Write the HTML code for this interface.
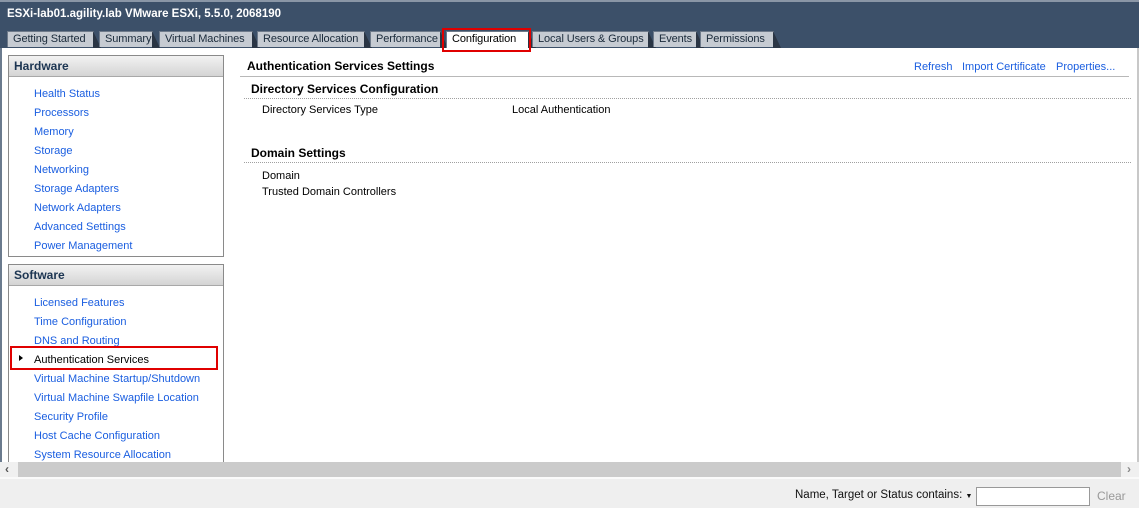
<!DOCTYPE html>
<html><head><style>
*{margin:0;padding:0;box-sizing:border-box}
body{width:1139px;height:508px;overflow:hidden;background:#fff;font-family:"Liberation Sans",sans-serif;font-size:11px;position:relative;color:#000}
.a{position:absolute;white-space:nowrap}
#title{left:0;top:0;width:1139px;height:48px;background:#3c5069;border-top:2px solid #8a96a6}
.tab{position:absolute;top:31px;height:16px;background:#c6cbd2;border:1px solid #6e7a8a;border-bottom:none;color:#1a2a3a;font-size:11px;padding:1px 0 0 5px;white-space:nowrap;letter-spacing:-0.1px}
.tab:after{content:"";position:absolute;right:-8px;top:-1px;border-left:8px solid #2a3544;border-top:17px solid transparent}
.lnk{color:#1a5ee0}
.box{position:absolute;left:8px;width:216px;border:1px solid #8a8a8a;background:#fff}
.hd{height:21px;background:linear-gradient(#f2f2f2,#d4d4d4);border-bottom:1px solid #a8a8a8;font-weight:bold;color:#1c3552;padding:3px 0 0 5px;font-size:12px}
.dot{position:absolute;height:0;border-top:1px dotted #a0a0a0}
</style></head><body>
<div id="title" class="a"></div>
<div class="a" style="left:7px;top:8px;color:#fff;font-weight:bold;font-size:11.5px">ESXi-lab01.agility.lab VMware ESXi, 5.5.0, 2068190</div>
<div class="tab" style="left:7px;width:87px">Getting Started</div>
<div class="tab" style="left:99px;width:54px">Summary</div>
<div class="tab" style="left:159px;width:94px">Virtual Machines</div>
<div class="tab" style="left:257px;width:108px">Resource Allocation</div>
<div class="tab" style="left:370px;width:71px">Performance</div>
<div class="tab" style="left:446px;width:83px;background:#fff;color:#000;height:17px">Configuration</div>
<div class="a" style="left:442px;top:28px;width:89px;height:24px;border:2px solid #e00000"></div>
<div class="tab" style="left:532px;width:117px">Local Users &amp; Groups</div>
<div class="tab" style="left:653px;width:44px">Events</div>
<div class="tab" style="left:700px;width:74px">Permissions</div>
<div class="a" style="left:0;top:48px;width:2px;height:414px;background:#6b7b8e"></div>
<div class="a" style="left:1137px;top:48px;width:2px;height:414px;background:#c8c8c8"></div>

<div class="box" style="top:55px;height:202px"><div class="hd">Hardware</div></div>
<div class="a lnk" style="left:34px;top:85px;line-height:19px">Health Status<br>Processors<br>Memory<br>Storage<br>Networking<br>Storage Adapters<br>Network Adapters<br>Advanced Settings<br>Power Management</div>

<div class="box" style="top:264px;height:200px;border-bottom:none"><div class="hd">Software</div></div>
<div class="a lnk" style="left:34px;top:294px;line-height:19px">Licensed Features<br>Time Configuration<br>DNS and Routing<br><span style="color:#000">Authentication Services</span><br>Virtual Machine Startup/Shutdown<br>Virtual Machine Swapfile Location<br>Security Profile<br>Host Cache Configuration<br>System Resource Allocation</div>
<div class="a" style="left:19px;top:355px;border-left:4px solid #000;border-top:3px solid transparent;border-bottom:3px solid transparent"></div>
<div class="a" style="left:10px;top:346px;width:208px;height:24px;border:2px solid #e00000"></div>

<div class="a" style="left:247px;top:59px;font-weight:bold;font-size:12px">Authentication Services Settings</div>
<div class="a lnk" style="left:914px;top:61px">Refresh</div>
<div class="a lnk" style="left:962px;top:61px">Import Certificate</div>
<div class="a lnk" style="left:1056px;top:61px">Properties...</div>
<div class="a" style="left:240px;top:76px;width:889px;height:1px;background:#b8b8b8"></div>
<div class="a" style="left:251px;top:82px;font-weight:bold;font-size:12px">Directory Services Configuration</div>
<div class="dot" style="left:244px;top:98px;width:887px"></div>
<div class="a" style="left:262px;top:104px">Directory Services Type</div>
<div class="a" style="left:512px;top:104px">Local Authentication</div>
<div class="a" style="left:251px;top:146px;font-weight:bold;font-size:12px">Domain Settings</div>
<div class="dot" style="left:244px;top:162px;width:887px"></div>
<div class="a" style="left:262px;top:168px;line-height:16px">Domain<br>Trusted Domain Controllers</div>

<div class="a" style="left:0;top:462px;width:1139px;height:15px;background:#cbcbcb"></div>
<div class="a" style="left:0;top:462px;width:18px;height:15px;background:#f0f0f0;color:#555;font-size:12px;font-weight:bold;padding-left:5px">&lsaquo;</div>
<div class="a" style="left:1121px;top:462px;width:18px;height:15px;background:#f0f0f0;color:#888;font-size:12px;font-weight:bold;padding-left:6px">&rsaquo;</div>
<div class="a" style="left:0;top:477px;width:1139px;height:31px;background:#efefef;border-top:2px solid #fafafa"></div>
<div class="a" style="left:795px;top:489px;font-size:11.5px;color:#111">Name, Target or Status contains: <span style="font-size:7px">▼</span></div>
<div class="a" style="left:976px;top:487px;width:114px;height:19px;background:#fff;border:1px solid #999"></div>
<div class="a" style="left:1097px;top:489px;font-size:12px;color:#999">Clear</div>
</body></html>
